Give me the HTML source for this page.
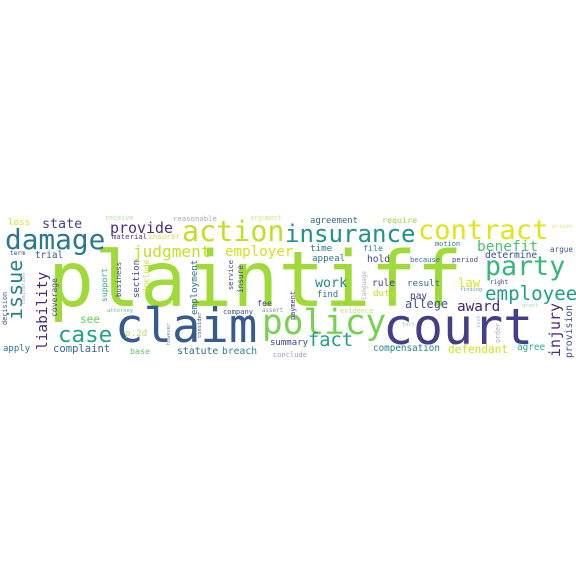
<!DOCTYPE html>
<html><head><meta charset="utf-8"><style>
html,body{margin:0;padding:0;background:#fff;width:576px;height:576px;overflow:hidden}
body{position:relative}
span{position:absolute;font-family:"DejaVu Sans Mono","Liberation Mono",monospace;line-height:1;white-space:nowrap;transform-origin:0 0;
left:calc(var(--x)*1px);font-size:calc(var(--f)*.86px);top:calc((var(--b) - var(--f)*.7276)*1px)}
span.v{transform:rotate(-90deg);top:calc(var(--b)*1px)}
</style></head><body>
<span style="--x:48;--b:308;--f:89;color:#a0da39">plaintiff</span>
<span style="--x:115;--b:343;--f:55;color:#365c8d">claim</span>
<span style="--x:383;--b:345;--f:58;color:#433e85">court</span>
<span style="--x:262;--b:335;--f:40;color:#7ad151">policy</span>
<span style="--x:182;--b:242;--f:33;color:#c2df23">action</span>
<span style="--x:285;--b:242;--f:28;color:#21918c">insurance</span>
<span style="--x:418;--b:240;--f:31.5;color:#e2e418">contract</span>
<span style="--x:485;--b:277;--f:31;color:#35b779">party</span>
<span style="--x:485;--b:300;--f:22.3;color:#1f9e89">employee</span>
<span style="--x:457;--b:312;--f:16.7;color:#482475">award</span>
<span style="--x:477;--b:252;--f:16.9;color:#4ac16d">benefit</span>
<span style="--x:550;--b:252;--f:8.9;color:#38598c">argue</span>
<span style="--x:485;--b:259;--f:11.2;color:#3f4788">determine</span>
<span style="--x:458;--b:287;--f:14.2;color:#d8e219">law</span>
<span style="--x:490;--b:285;--f:7;color:#472d7b">right</span>
<span style="--x:460;--b:292;--f:6.1;color:#6a9cb0">finding</span>
<span style="--x:407;--b:287;--f:10.7;color:#31688e">result</span>
<span style="--x:410;--b:300;--f:11;color:#443983">pay</span>
<span style="--x:405;--b:309;--f:13.9;color:#3b528b">allege</span>
<span style="--x:452;--b:262;--f:8.4;color:#3e4c8a">period</span>
<span style="--x:410;--b:262;--f:8.3;color:#2c728e">because</span>
<span style="--x:435;--b:247;--f:8.1;color:#2a788e">motion</span>
<span style="--x:382;--b:223;--f:9.7;color:#90d743">require</span>
<span style="--x:552;--b:230;--f:6.5;color:#dce68a">prison</span>
<span style="--x:373;--b:352;--f:10.8;color:#26828e">compensation</span>
<span style="--x:448;--b:353;--f:12.9;color:#d2e21b">defendant</span>
<span style="--x:517;--b:351;--f:10.9;color:#29af7f">agree</span>
<span style="--x:522;--b:309;--f:6.2;color:#a9e0b0">grant</span>
<span style="--x:402;--b:328;--f:6.3;color:#8fc9c0">tort</span>
<span style="--x:373;--b:297;--f:10.7;color:#c8e020">duty</span>
<span style="--x:372;--b:287;--f:11.1;color:#443a83">rule</span>
<span style="--x:367;--b:263;--f:11.1;color:#3e4989">hold</span>
<span style="--x:363;--b:251;--f:9.7;color:#25838e">file</span>
<span style="--x:310;--b:252;--f:10.7;color:#2d708e">time</span>
<span style="--x:312;--b:262;--f:10.7;color:#2a788e">appeal</span>
<span style="--x:310;--b:224;--f:10.3;color:#31688e">agreement</span>
<span style="--x:250;--b:221;--f:7.7;color:#d6e68c">argument</span>
<span style="--x:173;--b:221;--f:8.5;color:#a9a9b8">reasonable</span>
<span style="--x:225;--b:257;--f:16.5;color:#d5e21a">employer</span>
<span style="--x:315;--b:288;--f:15.5;color:#24868e">work</span>
<span style="--x:317;--b:298;--f:10.2;color:#2c728e">find</span>
<span style="--x:257;--b:306;--f:9.7;color:#414487">fee</span>
<span style="--x:223;--b:314;--f:8.3;color:#3b528b">company</span>
<span style="--x:262;--b:314;--f:6.8;color:#8f87b0">assert</span>
<span style="--x:340;--b:314;--f:8;color:#c4e07a">evidence</span>
<span style="--x:270;--b:347;--f:10.5;color:#3f4788">summary</span>
<span style="--x:308;--b:348;--f:21.8;color:#1f9e89">fact</span>
<span style="--x:222;--b:355;--f:11.3;color:#26828e">breach</span>
<span style="--x:177;--b:355;--f:11.4;color:#2e6e8e">statute</span>
<span style="--x:273;--b:357;--f:8.2;color:#9e9cb8">conclude</span>
<span style="--x:130;--b:354;--f:9.7;color:#5ec962">base</span>
<span style="--x:53;--b:353;--f:12.3;color:#31688e">complaint</span>
<span style="--x:3;--b:353;--f:10.5;color:#2c728e">apply</span>
<span style="--x:58;--b:343;--f:26.2;color:#20a386">case</span>
<span style="--x:80;--b:323;--f:12.9;color:#6ccd5a">see</span>
<span style="--x:125;--b:337;--f:10.7;color:#b5de6a">p.2d</span>
<span style="--x:107;--b:314;--f:6.3;color:#5cc38a">attorney</span>
<span style="--x:35;--b:259;--f:10.9;color:#3b528b">trial</span>
<span style="--x:112;--b:239;--f:8.5;color:#453781">material</span>
<span style="--x:148;--b:239;--f:8.9;color:#d3e25a">insurer</span>
<span style="--x:105;--b:221;--f:7.8;color:#b4e0a0">receive</span>
<span style="--x:10;--b:256;--f:7.3;color:#3e4c8a">term</span>
<span style="--x:8;--b:226;--f:10.7;color:#dde318">loss</span>
<span style="--x:42;--b:229;--f:15.5;color:#414487">state</span>
<span style="--x:110;--b:234;--f:17.4;color:#472f7d">provide</span>
<span style="--x:5;--b:250;--f:32.3;color:#2a788e">damage</span>
<span style="--x:133;--b:258;--f:18.7;color:#c2df23">judgment</span>

<span class="v" style="--x:5;--b:320;--f:23.3;color:#26828e">issue</span>
<span class="v" style="--x:36;--b:350;--f:16.8;color:#482878">liability</span>
<span class="v" style="--x:50;--b:317;--f:9.4;color:#414487">coverage</span>
<span class="v" style="--x:2;--b:325;--f:8;color:#3b528b">decision</span>
<span class="v" style="--x:22;--b:305;--f:6.2;color:#a7a7c0">limitation</span>
<span class="v" style="--x:100;--b:302;--f:9.4;color:#25ac82">support</span>
<span class="v" style="--x:115;--b:297;--f:8.5;color:#3f4788">business</span>
<span class="v" style="--x:133;--b:298;--f:10.5;color:#404688">section</span>
<span class="v" style="--x:143;--b:292;--f:8.9;color:#c2df23">include</span>
<span class="v" style="--x:190;--b:315;--f:10.7;color:#2c728e">employment</span>
<span class="v" style="--x:167;--b:345;--f:6.1;color:#7d8ab0">however</span>
<span class="v" style="--x:198;--b:338;--f:6.3;color:#3b528b">consider</span>
<span class="v" style="--x:227;--b:290;--f:8.3;color:#414487">service</span>
<span class="v" style="--x:237;--b:293;--f:9;color:#3e4a89">insure</span>
<span class="v" style="--x:290;--b:320;--f:8;color:#453781">payment</span>
<span class="v" style="--x:362;--b:300;--f:7;color:#a9a9c0">language</span>
<span class="v" style="--x:548;--b:357;--f:17.4;color:#472d7b">injury</span>
<span class="v" style="--x:565;--b:358;--f:11.4;color:#3b528b">provision</span>
<span class="v" style="--x:495;--b:343;--f:7.8;color:#a9a9c0">order</span>
<span class="v" style="--x:477;--b:328;--f:6.3;color:#9fc9c5">seek</span>
</body></html>
